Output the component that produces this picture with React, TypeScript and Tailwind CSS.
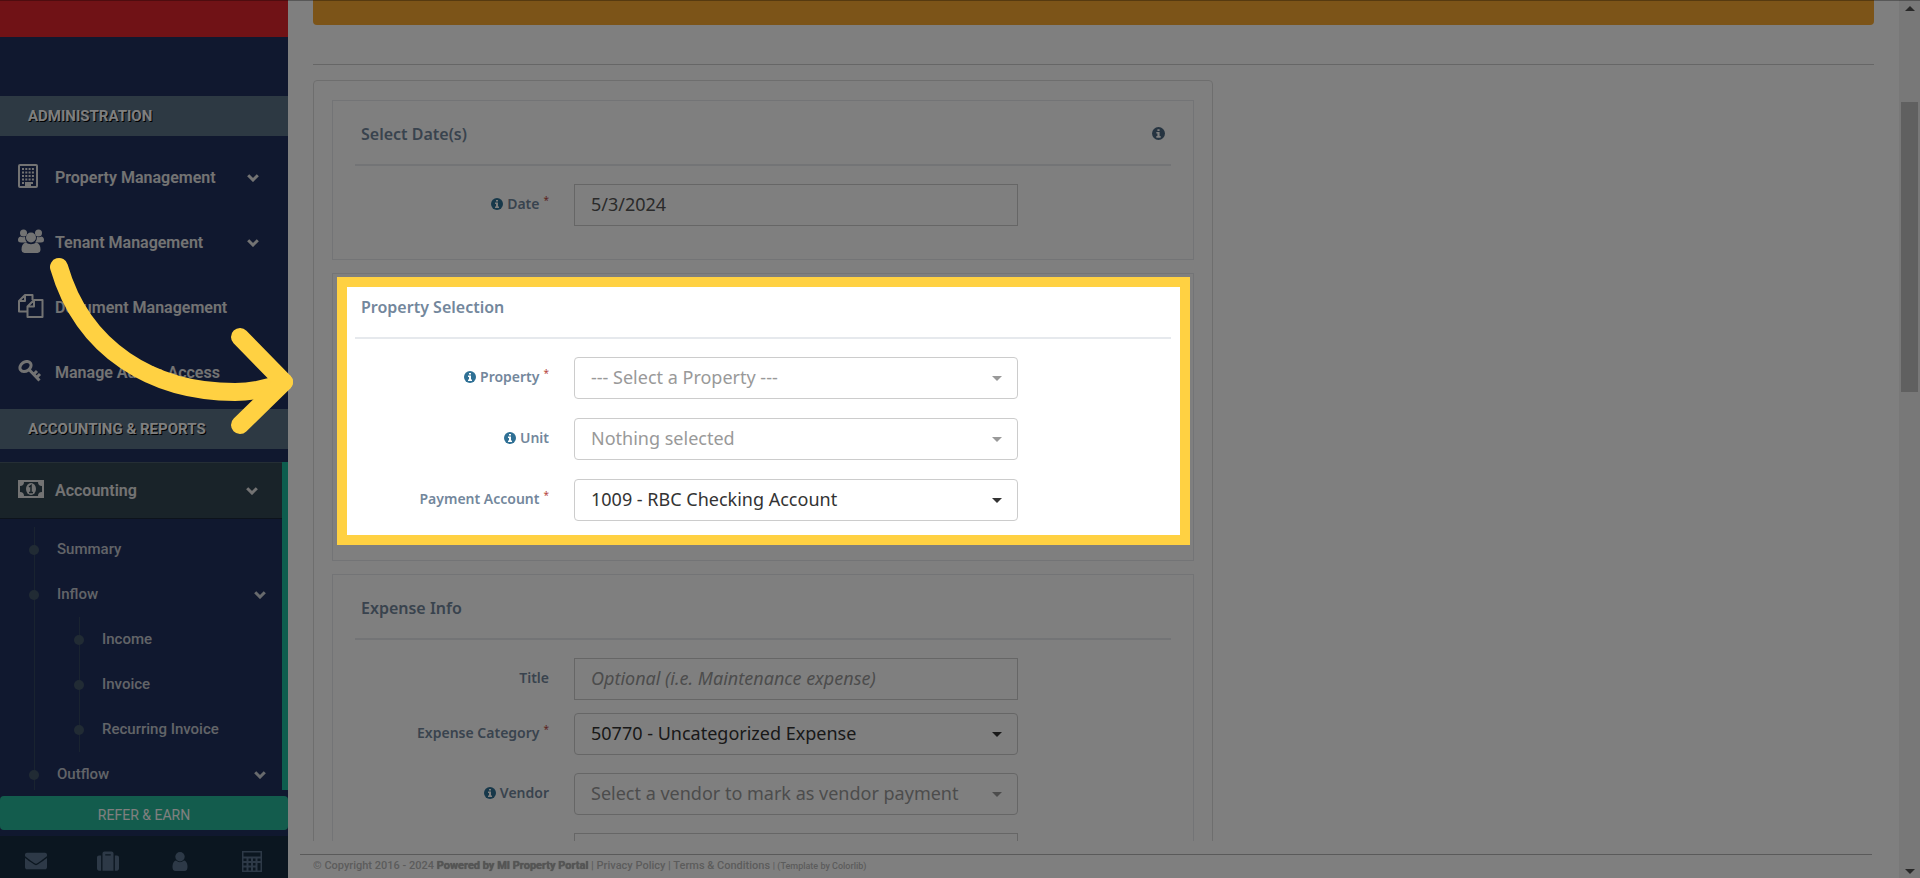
import type { ReactNode } from "react";
import { FaEnvelope, FaSuitcase } from "react-icons/fa";

function InfoIcon({ className }: { className: string }) {
  return (
    <svg viewBox="0 0 12 12" className={className} aria-hidden="true">
      <circle cx="6" cy="6" r="6" fill="currentColor" />
      <path d="M5 2h2v1.600H5zM4 4.600h3v3.800h1V10H4V8.400h1V6.100H4z" fill="#fff" />
    </svg>
  );
}

function Chevron({ className }: { className?: string }) {
  return (
    <svg viewBox="0 0 12 8" className={`h-2 w-3 ${className ?? ""}`} fill="none" stroke="currentColor" strokeWidth="3" aria-hidden="true">
      <path d="M1.200 1.200L6 6L10.800 1.200" />
    </svg>
  );
}

function BuildingIcon() {
  return (
    <svg viewBox="0 0 20 24" className="h-6 w-5" fill="none" stroke="currentColor" aria-hidden="true">
      <rect x="1" y="1" width="18" height="22" rx="1" strokeWidth="2" />
      <path d="M4 5h12M4 8.500h12M4 12h12M4 15.500h12M4 19h3M13 19h3" strokeWidth="2" strokeDasharray="2 1.300" />
      <path d="M7 22v-4h6v4z" fill="currentColor" stroke="none" />
    </svg>
  );
}

function UsersIcon() {
  return (
    <svg viewBox="0 0 26 24" className="h-6 w-[26px]" fill="currentColor" aria-hidden="true">
      <circle cx="5.500" cy="4" r="3.500" />
      <circle cx="20.500" cy="4" r="3.500" />
      <path d="M2.500 7.500q3 1.500 4.500 0 0 4 2 6H3q-3 0-3-2.500 0-3 2.500-3.500zM23.500 7.500q-3 1.500-4.500 0 0 4-2 6h6q3 0 3-2.500 0-3-2.500-3.500z" />
      <circle cx="13" cy="8.500" r="5" />
      <path d="M7.500 13.500q5.500 3.500 11 0 4 1.500 4 7 0 3-3 3.500h-13q-3-.5-3-3.500 0-5.500 4-7z" />
    </svg>
  );
}

function FilesIcon() {
  return (
    <svg viewBox="0 0 26 24" className="h-6 w-[26px]" fill="none" stroke="currentColor" strokeWidth="2" strokeLinejoin="round" aria-hidden="true">
      <path d="M9.500 17.500H1V7l6-6h7.500v5M7 1v6H1" />
      <path d="M16 6h8.500v17H9.500V12.500zM16 6v6.500H9.500" />
    </svg>
  );
}

function KeyIcon() {
  return (
    <svg viewBox="0 0 24 22" className="h-[22px] w-6" fill="none" stroke="currentColor" aria-hidden="true">
      <ellipse cx="7.500" cy="6.500" rx="6" ry="4.500" strokeWidth="3" transform="rotate(-35 7.500 6.500)" />
      <path d="M11 9.500l10.500 11M15.500 14.500l3.500-3.500M18.500 17.500l3.500-3.500" strokeWidth="3" />
    </svg>
  );
}

function MoneyIcon() {
  return (
    <svg viewBox="0 0 26 18" className="h-[18px] w-[26px]" aria-hidden="true">
      <path fillRule="evenodd" fill="currentColor" d="M0 0h26v18H0zM6 2a4 4 0 0 1-4 4v6a4 4 0 0 1 4 4h14a4 4 0 0 1 4-4V6a4 4 0 0 1-4-4z" />
      <ellipse cx="13" cy="9" rx="5" ry="6" fill="currentColor" />
      <path d="M11 7l2-1.500V12M11 12.500h4" fill="none" stroke="#304450" strokeWidth="1.500" />
    </svg>
  );
}

function PersonIcon() {
  return (
    <svg viewBox="0 0 16 19" className="h-[19px] w-4" fill="currentColor" aria-hidden="true">
      <path d="M4 8.500Q1 9 .5 14q-.3 5 3 5h9q3.300 0 3-5Q15 9 12 8.500 8 12 4 8.500z" />
      <circle cx="8" cy="4.700" r="4.700" />
    </svg>
  );
}

function CalculatorIcon() {
  return (
    <svg viewBox="0 0 20 21" className="h-[21px] w-5" fill="none" stroke="currentColor" aria-hidden="true">
      <rect x=".75" y=".75" width="18.500" height="19.500" strokeWidth="1.500" />
      <path d="M1 6.500h18M1 11h18M1 15.500h13M5.500 6.500V20M10 6.500V20M14.500 6.500V20" strokeWidth="2" />
    </svg>
  );
}

function SectionLabel({ children }: { children: ReactNode }) {
  return (
    <h3 className="flex h-10 items-center bg-[#5b7386] pl-7 text-[15px] font-bold text-white [text-shadow:1px_1px_#000]">
      {children}
    </h3>
  );
}

function NavItem({ icon, label, chevron }: { icon: ReactNode; label: string; chevron?: boolean }) {
  return (
    <a href="#" className="flex h-[65px] items-center pr-[29px] pl-[18px] text-base font-semibold text-[#e7e7e7]">
      <span className="flex w-[37px] pb-1">{icon}</span>
      <span className="flex-1">{label}</span>
      {chevron && <Chevron />}
    </a>
  );
}

function SubItem({ label, chevron }: { label: string; chevron?: boolean }) {
  return (
    <a href="#" className="flex h-[45px] items-center text-[15px] font-medium text-[#c4c8d0]">
      <span className="-ml-[6px] size-[10px] rounded-full bg-[#425668]" />
      <span className="flex-1 pl-[18px]">{label}</span>
      {chevron && <Chevron className="mr-4 text-[#d0d4da]" />}
    </a>
  );
}

function Sidebar() {
  return (
    <nav className="relative z-10 flex w-72 shrink-0 flex-col bg-[#20305e] font-['Roboto',sans-serif]">
      <div className="h-[37px] shrink-0 bg-[#e0242c]" />
      <div className="h-[59px] shrink-0" />
      <SectionLabel>ADMINISTRATION</SectionLabel>
      <div className="pt-[9px] pb-1">
        <NavItem icon={<BuildingIcon />} label="Property Management" chevron />
        <NavItem icon={<UsersIcon />} label="Tenant Management" chevron />
        <NavItem icon={<FilesIcon />} label="Document Management" />
        <NavItem icon={<KeyIcon />} label="Manage Admin Access" />
      </div>
      <SectionLabel>ACCOUNTING &amp; REPORTS</SectionLabel>
      <div className="mt-[13px] min-h-0 flex-1 overflow-hidden border-r-6 border-[#1abb9c]">
        <a href="#" className="flex h-[57px] items-center border-t border-b border-t-[#4a5d6a] border-b-[#1a2638] bg-[#334653] pr-6 pl-[18px] text-base font-semibold text-[#e7e7e7]">
          <span className="flex w-[37px] pb-1"><MoneyIcon /></span>
          <span className="flex-1">Accounting</span>
          <Chevron />
        </a>
        <div className="mt-2 ml-[34px] border-l border-[#334660]">
          <SubItem label="Summary" />
          <SubItem label="Inflow" chevron />
          <div className="ml-11 border-l border-[#334660]">
            <SubItem label="Income" />
            <SubItem label="Invoice" />
            <SubItem label="Recurring Invoice" />
          </div>
          <SubItem label="Outflow" chevron />
        </div>
      </div>
      <div className="py-1.5">
        <button className="block h-[34px] w-full rounded bg-[#26b99a] pt-1 text-sm text-white">REFER &amp; EARN</button>
      </div>
      <div className="grid h-[42px] shrink-0 grid-cols-4 place-items-center bg-[#172d40] pt-2 text-[#5a738e]">
        <a href="#" aria-label="Messages"><FaEnvelope className="size-[22px]" /></a>
        <a href="#" aria-label="Portfolio"><FaSuitcase className="size-[22px]" /></a>
        <a href="#" aria-label="Profile"><PersonIcon /></a>
        <a href="#" aria-label="Calculator"><CalculatorIcon /></a>
      </div>
    </nav>
  );
}

function Section({ title, info, className, children }: { title: string; info?: boolean; className: string; children: ReactNode }) {
  return (
    <section className={`relative border border-[#e6e9ed] px-[22px] ${className}`}>
      <div className="flex h-[65px] items-center justify-between border-b-2 border-[#e6e9ed] px-1.5 pt-0.5 text-base font-semibold text-[#73879c]">
        <h2>{title}</h2>
        {info && <InfoIcon className="size-[13px] text-[#4c6982]" />}
      </div>
      {children}
    </section>
  );
}

function Field({ id, label, info, required, children }: { id: string; label: string; info?: boolean; required?: boolean; children: ReactNode }) {
  return (
    <div className="grid grid-cols-[194px_minmax(0,444px)] items-center gap-[25px]">
      <label htmlFor={id} className="flex items-center justify-end gap-1 pb-0.5 text-sm font-semibold text-[#73879c]">
        {info && <InfoIcon className="size-3 text-[#2f7095]" />}
        {label}
        {required && <span className="pb-2 text-[10px] font-normal text-[#b5483e]">*</span>}
      </label>
      {children}
    </div>
  );
}

function Select({ id, value, filled }: { id: string; value: string; filled?: boolean }) {
  return (
    <div className="grid items-center">
      <select id={id} className={`col-start-1 row-start-1 h-[42px] w-full appearance-none rounded border border-[#ccc] bg-white px-4 pb-0.5 text-lg ${filled ? "text-[#333]" : "text-[#999]"}`}>
        <option>{value}</option>
      </select>
      <svg viewBox="0 0 10 5" className={`pointer-events-none col-start-1 row-start-1 mr-4 h-[5px] w-[10px] justify-self-end ${filled ? "text-[#333]" : "text-[#999]"}`} fill="currentColor" aria-hidden="true">
        <path d="M0 0h10L5 5z" />
      </svg>
    </div>
  );
}

const inputClass = "h-[42px] w-full border border-[#ccc] bg-white px-4 pb-0.5 text-lg text-[#555] placeholder:text-[#999] placeholder:italic";

function Scrollbar() {
  return (
    <div className="flex w-[21px] shrink-0 flex-col items-center bg-[#f1f1f1] pt-1.5 pb-1 text-[#505050]" aria-hidden="true">
      <svg viewBox="0 0 10 5" className="h-[5px] w-[10px]" fill="currentColor"><path d="M0 5h10L5 0z" /></svg>
      <div className="mt-[91px] h-[290px] w-[17px] bg-[#c1c1c1]" />
      <svg viewBox="0 0 10 5" className="mt-auto h-[5px] w-[10px]" fill="currentColor"><path d="M0 0h10L5 5z" /></svg>
    </div>
  );
}

export default function App() {
  return (
    <div className="relative flex h-screen overflow-hidden bg-white font-['Noto_Sans',sans-serif]">
      <Sidebar />
      <div className="flex min-w-0 flex-1 flex-col">
        <main className="min-h-0 flex-1 px-[25px]">
          <div className="h-[25px] rounded-b bg-[#f8a830]" />
          <hr className="mt-[39px] border-[#ccc]" />
          <form className="mt-[15px] w-full max-w-[900px] rounded border border-[#ddd] px-[18px] pt-[19px]">
            <Section title="Select Date(s)" info className="h-40">
              <div className="pt-[18px]">
                <Field id="date" label="Date" info required>
                  <input id="date" defaultValue="5/3/2024" className={inputClass} />
                </Field>
              </div>
            </Section>
            <Section title="Property Selection" className="mt-[13px] h-72">
              <div className="flex flex-col gap-[19px] pt-[18px]">
                <Field id="property" label="Property" info required>
                  <Select id="property" value="--- Select a Property ---" />
                </Field>
                <Field id="unit" label="Unit" info>
                  <Select id="unit" value="Nothing selected" />
                </Field>
                <Field id="account" label="Payment Account" required>
                  <Select id="account" value="1009 - RBC Checking Account" filled />
                </Field>
              </div>
              <div className="pointer-events-none absolute top-[3px] right-[3px] bottom-[15px] left-1 z-50 border-10 border-[#ffd142] shadow-[0_0_0_2400px_rgba(0,0,0,0.5)]" />
            </Section>
            <Section title="Expense Info" className="mt-[13px]">
              <div className="flex flex-col pt-[18px]">
                <Field id="title" label="Title">
                  <input id="title" placeholder="Optional (i.e. Maintenance expense)" className={inputClass} />
                </Field>
                <div className="mt-[13px] flex flex-col gap-[18px]">
                  <Field id="category" label="Expense Category" required>
                    <Select id="category" value="50770 - Uncategorized Expense" filled />
                  </Field>
                  <Field id="vendor" label="Vendor" info>
                    <Select id="vendor" value="Select a vendor to mark as vendor payment" />
                  </Field>
                  <Field id="reference" label="">
                    <input id="reference" aria-label="Reference" className={inputClass} />
                  </Field>
                </div>
              </div>
            </Section>
          </form>
        </main>
        <footer className="relative z-10 h-[37px] shrink-0 bg-white pt-[13px] pr-[27px] pl-3 font-['Roboto',sans-serif]">
          <p className="border-t border-[#b5b5b5] pl-[13px] text-[11px] leading-[22px] font-medium text-[#b9b9b9]">
            © Copyright 2016 - 2024 <a href="#" className="font-bold text-[#aaa] [text-shadow:0_0_1px_#999]">Powered by MI Property Portal</a> | <a href="#">Privacy Policy</a> | <a href="#">Terms &amp; Conditions</a> <small className="text-[9px]">| (Template by <a href="#">Colorlib</a>)</small>
          </p>
        </footer>
      </div>
      <Scrollbar />
      <div className="pointer-events-none absolute inset-x-0 top-0 z-[55] border-t border-black/30" />
      <svg viewBox="0 0 250 190" className="pointer-events-none absolute top-[250px] left-[45px] z-[60] h-[190px] w-[250px]" fill="none" stroke="#ffd142" strokeWidth="18" strokeLinecap="round" strokeLinejoin="round" aria-hidden="true">
        <path d="M14 17C38 100 108 142 190 142Q215 142 239 132" />
        <path d="M195 87L239 132L195 175" />
      </svg>
    </div>
  );
}
